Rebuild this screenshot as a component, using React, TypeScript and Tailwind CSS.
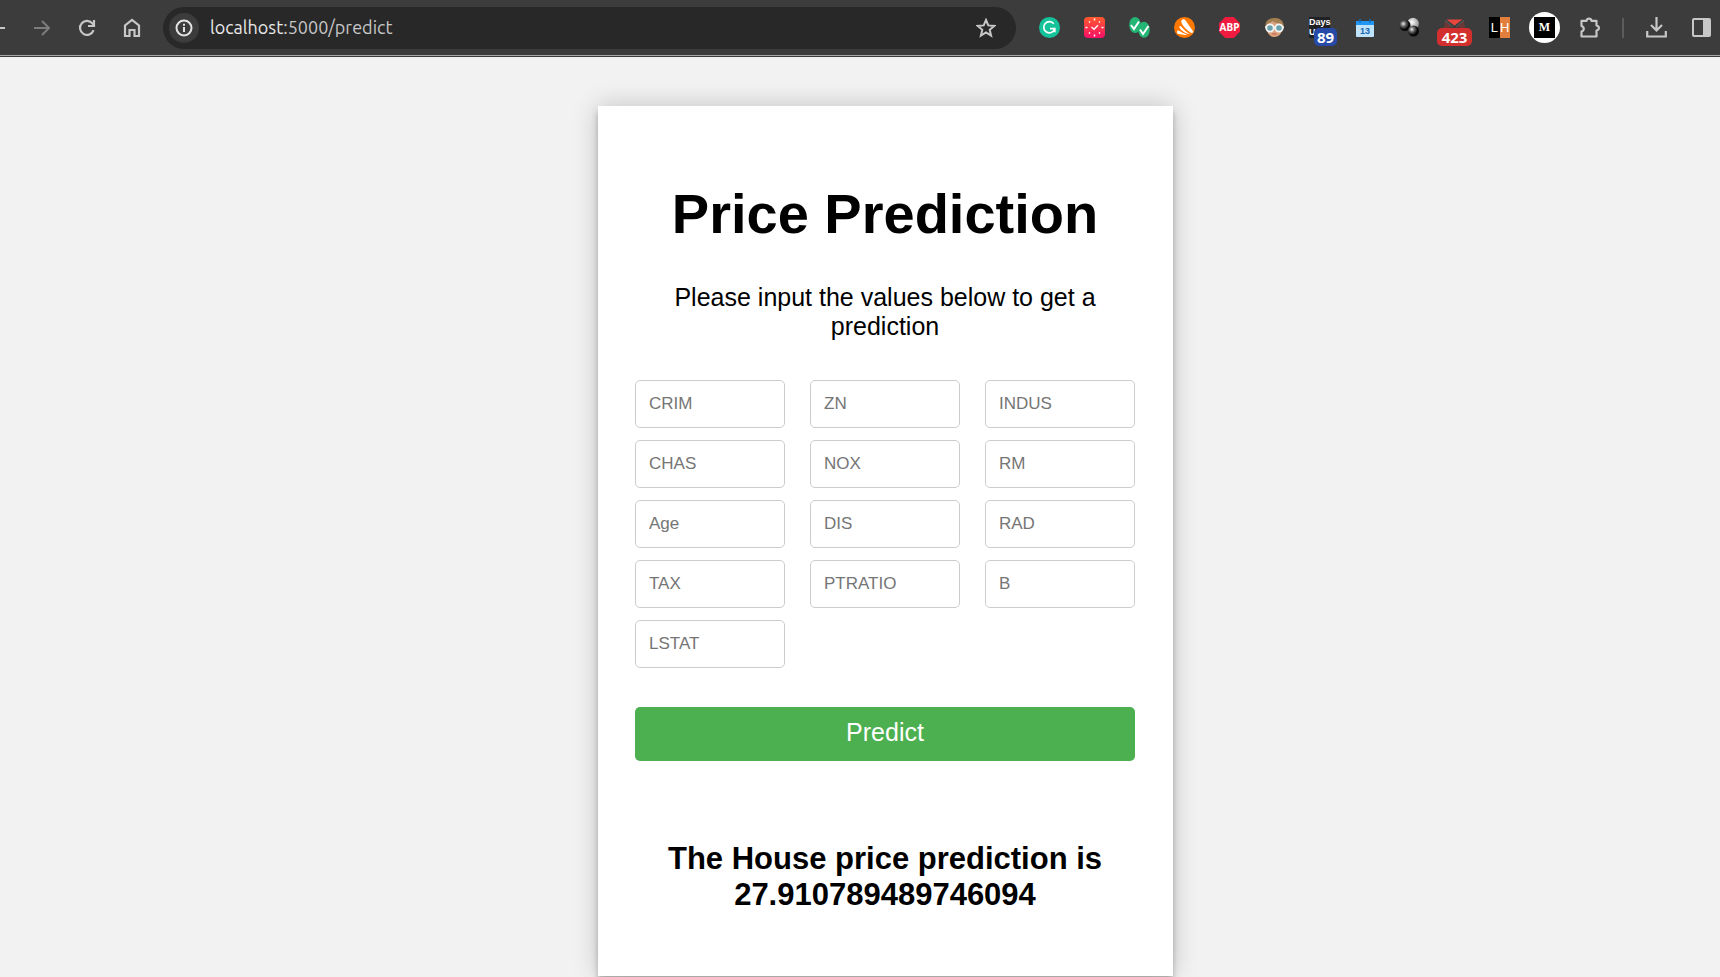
import type { ReactNode } from "react";

const fields = ["CRIM", "ZN", "INDUS", "CHAS", "NOX", "RM", "Age", "DIS", "RAD", "TAX", "PTRATIO", "B", "LSTAT"];

function ToolButton({ label, children }: { label: string; children: ReactNode }) {
  return (
    <button type="button" aria-label={label} className="relative flex h-[31px] w-[31px] shrink-0 items-center justify-center">
      {children}
    </button>
  );
}

function Badge({ className, children }: { className: string; children: ReactNode }) {
  return (
    <span className={`absolute flex items-center justify-center rounded-[5px] font-['Noto_Sans',sans-serif] text-[15px] leading-none font-bold text-white ${className}`}>
      {children}
    </span>
  );
}

function Toolbar() {
  return (
    <header className="flex h-[57px] items-center overflow-hidden border-b border-[#3c3c3c] bg-[#3c3c3c]">
      <div className="flex h-full w-full items-center border-b border-[#a8a8a8]">
        <nav className="flex shrink-0 items-center gap-[14px] text-[#c7c7c7]">
          <div className="-ml-[19px]">
            <ToolButton label="Back">
              <svg width="16" height="16" viewBox="0 0 16 16" fill="none" stroke="currentColor" strokeWidth="2"><path d="M16 8H2M8 1L1 8l7 7" /></svg>
            </ToolButton>
          </div>
          <ToolButton label="Forward">
            <svg className="text-[#7c7c7c]" width="16" height="16" viewBox="0 0 16 16" fill="none" stroke="currentColor" strokeWidth="2"><path d="M0 8h14M8 1l7 7-7 7" /></svg>
          </ToolButton>
          <ToolButton label="Reload">
            <svg width="18" height="18" viewBox="0 0 18 18" fill="none" stroke="currentColor" strokeWidth="2.200"><path d="M15.600 11.200A7 7 0 1 1 14.600 4.600L16 6.200M16 1v6h-6" /></svg>
          </ToolButton>
          <ToolButton label="Home">
            <svg width="18" height="20" viewBox="0 0 18 20" fill="none" stroke="currentColor" strokeWidth="2.200"><path d="M2 18V7.500L9 2l7 5.500V18h-4.500v-6h-5v6z" /></svg>
          </ToolButton>
        </nav>
        <div className="ml-4 flex h-[42px] min-w-0 flex-1 items-center rounded-full bg-[#282828] pl-[6px]">
          <button type="button" aria-label="Site information" className="flex h-[30px] w-[30px] shrink-0 items-center justify-center rounded-full bg-[#3c3c3c] text-[#e3e3e3]">
            <svg width="18" height="18" viewBox="0 0 18 18" fill="none" stroke="currentColor" strokeWidth="2"><circle cx="9" cy="9" r="7.500" /><path d="M9 8v5M9 4.800v2" /></svg>
          </button>
          <a href="#predict" className="ml-[11px] flex-1 truncate font-[Ubuntu,'Noto_Sans',sans-serif] text-[18px] text-[#c7c7c7]">
            <span className="text-[#e8e8e8]">localhost</span>:5000/predict
          </a>
          <button type="button" aria-label="Bookmark this tab" className="mr-5 shrink-0 text-[#c7c7c7]">
            <svg width="20" height="20" viewBox="0 0 20 20" fill="none" stroke="currentColor" strokeWidth="2"><path d="M10 2l2.300 5.400 5.900.5-4.500 3.900 1.400 5.800-5.100-3.100-5.100 3.100 1.400-5.800L1.800 7.900l5.900-.5z" /></svg>
          </button>
        </div>
        <div className="ml-[18px] flex shrink-0 items-center gap-[14px] text-[#c7c7c7]">
          <ToolButton label="Grammar checker">
            <svg width="21" height="21" viewBox="0 0 21 21" fill="none"><circle cx="10.500" cy="10.500" r="10.500" fill="#15c39a" /><path d="M14.800 6.800a5.600 5.600 0 1 0 .8 5.400M11 11.700h4.800v3.500" stroke="#fff" strokeWidth="1.700" /></svg>
          </ToolButton>
          <ToolButton label="Time tracker">
            <svg width="21" height="21" viewBox="0 0 21 21" fill="none">
              <defs><linearGradient id="clock" x2="0" y2="1"><stop stopColor="#ff5a2c" /><stop offset="1" stopColor="#f80f67" /></linearGradient></defs>
              <rect width="21" height="21" rx="4" fill="url(#clock)" />
              <path d="M10.500 1.500v2M10.500 17.500v2M1.500 10.500h2M17.500 10.500h2M5 4.500l1 1M15 5.500l1-1M5 16.500l1-1M16 16.500l-1-1" stroke="#fff" strokeWidth="1.500" />
              <path d="M7.500 10l2.500 2.200 4-4" stroke="#fff" strokeWidth="1.400" />
            </svg>
          </ToolButton>
          <ToolButton label="Double check">
            <svg width="21" height="21" viewBox="0 0 21 21" fill="none"><ellipse cx="6" cy="8" rx="5.800" ry="8" fill="#23b574" /><ellipse cx="15" cy="12.800" rx="5.800" ry="8" fill="#23b574" /><path d="M2 8l3 4 5-7.500M11 12.500l3 4.500 5.500-8" stroke="#fff" strokeWidth="2" /></svg>
          </ToolButton>
          <ToolButton label="Web security">
            <svg width="21" height="21" viewBox="0 0 21 21"><circle cx="10.500" cy="10.500" r="10.500" fill="#ff7800" /><g fill="#fff"><path d="M7.300 5C6.800 2 10.200 1.400 11.600 3.500L19 14.300c.5 1.300-.5 2.200-1.800 1.500C12.500 13 8.500 9 7.300 5z" /><path d="M5.200 9.700c.3-1.300 1.600-.9 2.300.1 2 3 5 5.300 8.500 7.200-5-.8-9.500-3.300-10.800-7.300z" /><path d="M3 14.800c.2-1.400 1.600-1.500 2.600-.7 2 1.600 4.400 2.500 7.400 3.400-1.500.8-3.500.5-5 0l-4.400-.8c-.5-.5-.7-1.200-.6-1.900z" /></g></svg>
          </ToolButton>
          <ToolButton label="Ad blocker">
            <svg width="21" height="21" viewBox="0 0 21 21"><path d="M6.200 0h8.600L21 6.200v8.600L14.800 21H6.200L0 14.800V6.200z" fill="#ef1c3f" /><text x="10.500" y="14.300" textAnchor="middle" fill="#fff" fontSize="10" fontWeight="700" fontFamily="Noto Sans, sans-serif">ABP</text></svg>
          </ToolButton>
          <ToolButton label="Profile face">
            <svg width="21" height="21" viewBox="0 0 21 21"><path d="M1.500 12C0 3 6 1 10.500 1S21 3 19.500 12z" fill="#a37f52" /><path d="M2.500 10C3 6 7 6 8.500 4c2 2.500 8.500 1.500 10 6 0 6-3.500 10-8 10s-8-4-8-10z" fill="#d9a27c" /><path d="M1 10h19" stroke="#eee" strokeWidth="1.500" /><g fill="#6ba3ad" stroke="#f4f4f4" strokeWidth="1.800"><circle cx="6" cy="11" r="3.700" /><circle cx="15" cy="11" r="3.700" /></g><path d="M8.500 17h4" stroke="#c95f59" strokeWidth="1.200" /></svg>
          </ToolButton>
          <ToolButton label="Days until">
            <span className="flex h-[21px] w-[21px] flex-col bg-[#202124] text-left font-['Liberation_Sans',sans-serif] text-[9px] leading-[10px] font-bold text-white"><span>Days</span><span>U</span></span>
            <Badge className="top-[16px] left-[10px] h-[18px] w-[23px] bg-[#274aa8]">89</Badge>
          </ToolButton>
          <ToolButton label="Calendar">
            <svg width="18" height="18" viewBox="0 0 18 18"><rect y="2" width="18" height="16" rx="1" fill="#bfe3fb" /><path d="M0 2h18v4H0z" fill="#2196f3" /><path d="M4 0v4M14 0v4" stroke="#0d6fc4" strokeWidth="1.500" /><text x="9" y="15" textAnchor="middle" fill="#1766ad" fontSize="9" fontWeight="700" fontFamily="Liberation Sans, sans-serif">13</text></svg>
          </ToolButton>
          <ToolButton label="Spheres">
            <svg width="21" height="21" viewBox="0 0 21 21">
              <defs>
                <radialGradient id="dark" cx=".35" cy=".35"><stop stopColor="#eee" /><stop offset=".4" stopColor="#777" /><stop offset="1" stopColor="#080808" /></radialGradient>
                <radialGradient id="light" cx=".4" cy=".4"><stop stopColor="#fff" /><stop offset="1" stopColor="#aaa" /></radialGradient>
              </defs>
              <circle cx="14" cy="6.500" r="5.800" fill="url(#light)" /><circle cx="6" cy="8.500" r="5.500" fill="url(#dark)" /><circle cx="14.500" cy="14" r="5.500" fill="url(#dark)" />
            </svg>
          </ToolButton>
          <ToolButton label="Mail checker, 423 unread">
            <svg width="21" height="21" viewBox="0 0 21 21"><path d="M2.500 2.500h16L10.500 8.500z" fill="#e8453c" /><path d="M1 3.500L7.500 9 6 11H0zM20 3.500L13.500 9l1.500 2h6z" fill="#6b3835" /><path d="M1 3.500l8 6.500M20 3.500L12 10" stroke="#4a6266" strokeWidth="1" /></svg>
            <Badge className="top-[16px] -left-[2px] h-[18px] w-[35px] bg-[#d42f2f]">423</Badge>
          </ToolButton>
          <ToolButton label="Highlighter">
            <span className="flex h-[21px] w-[21px] font-['Liberation_Sans',sans-serif] text-[13px] leading-[21px] text-white"><span className="flex-1 bg-black">L</span><span className="flex-1 bg-[#e27f3d]">H</span></span>
          </ToolButton>
          <ToolButton label="Reader">
            <span className="flex h-[31px] w-[31px] items-center justify-center rounded-full bg-white"><span className="h-[21px] w-[21px] bg-black font-['Liberation_Serif',serif] text-[12px] leading-[21px] font-bold text-white">M</span></span>
          </ToolButton>
          <ToolButton label="Extensions">
            <svg width="22" height="22" viewBox="0 0 22 22" fill="none" stroke="currentColor" strokeWidth="2.200"><path d="M2.500 3.800h5C8 1 12 1 12.500 3.800h5V8.500c3.200.7 3.200 4.300 0 5v6h-15v-5c3-1 3-4.500 0-5.500z" strokeLinejoin="round" /></svg>
          </ToolButton>
        </div>
        <span className="ml-[17px] h-5 w-[2px] shrink-0 bg-[#5c5c5c]" />
        <div className="mr-[3px] ml-[17px] flex shrink-0 items-center gap-[14px] text-[#c7c7c7]">
          <ToolButton label="Downloads">
            <svg width="21" height="21" viewBox="0 0 21 21" fill="none" stroke="currentColor" strokeWidth="2.200"><path d="M10.500 0v13M5 8l5.500 5.500L16 8M1.200 14v5.500h18.600V14" /></svg>
          </ToolButton>
          <ToolButton label="Side panel">
            <svg width="19" height="19" viewBox="0 0 19 19"><rect x="1" y="1" width="17" height="17" rx="1" fill="none" stroke="currentColor" strokeWidth="2" /><path d="M11 1h7v17h-7z" fill="currentColor" /></svg>
          </ToolButton>
        </div>
      </div>
    </header>
  );
}

export default function App() {
  return (
    <div className="flex min-h-screen flex-col bg-[#f2f2f2] font-['Liberation_Sans',Arial,sans-serif] text-black">
      <Toolbar />
      <main className="flex justify-center pt-[49px] pb-px pl-[51px]">
        <section className="w-full max-w-[575px] bg-white pt-[76px] pr-[38px] pb-[63px] pl-[37px] text-center shadow-[0_0_25px_rgba(0,0,0,0.2),0_6px_6px_rgba(0,0,0,0.24)]">
          <h1 className="text-[56px] leading-[64px] font-bold">Price Prediction</h1>
          <p className="mt-[37px] text-[25px] leading-[29px]">Please input the values below to get a prediction</p>
          <form className="mt-[39px]" onSubmit={(e) => e.preventDefault()}>
            <div className="grid grid-cols-3 gap-x-[25px] gap-y-3">
              {fields.map((name) => (
                <input
                  key={name}
                  type="text"
                  name={name}
                  aria-label={name}
                  placeholder={name}
                  className="h-12 w-full min-w-0 rounded-[5px] border border-[#cccccc] bg-white px-[13px] text-[17px] placeholder:text-[#757575]"
                />
              ))}
            </div>
            <button type="submit" className="mt-[39px] h-[54px] w-full rounded-[5px] bg-[#4caf50] pb-1 text-[25px] leading-[29px] text-white">
              Predict
            </button>
          </form>
          <h2 className="mt-[80px] text-[31px] leading-[36px] font-bold">The House price prediction is 27.910789489746094</h2>
        </section>
      </main>
    </div>
  );
}
